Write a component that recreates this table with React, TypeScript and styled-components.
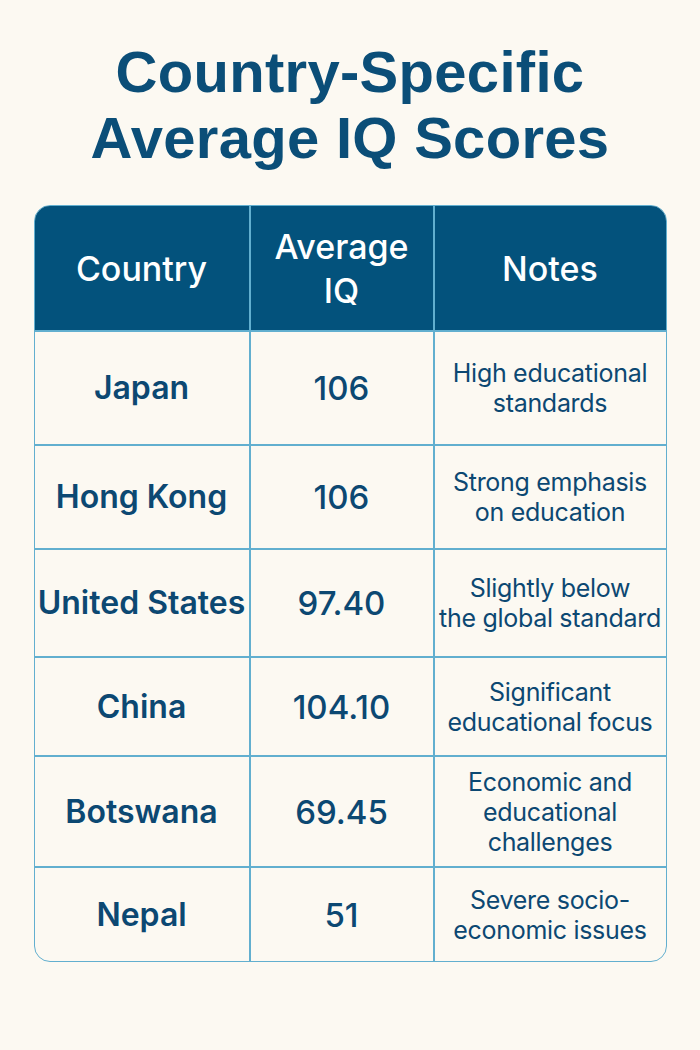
import React from "react";
import styled, { createGlobalStyle } from "styled-components";

const Global = createGlobalStyle`
  html, body { margin: 0; padding: 0; background: #fcf9f2; }
  body { font-family: Inter, "Noto Sans", sans-serif; }
`;

const Page = styled.div`
  width: 700px;
  height: 1050px;
  background: #fcf9f2;
  display: flex;
  flex-direction: column;
  align-items: center;
  box-sizing: border-box;
  padding-top: 39px;
`;

const Title = styled.h1`
  margin: 0;
  font-family: "Liberation Sans", Arial, sans-serif;
  font-weight: 700;
  font-size: 58px;
  line-height: 66px;
  color: #0b4e78;
  text-align: center;
  letter-spacing: 0.3px;
`;

const Table = styled.div`
  margin-top: 34px;
  width: 633px;
  display: grid;
  grid-template-columns: 216px 184px 1fr;
  border: 1.5px solid #62afcf;
  border-radius: 16px;
  overflow: hidden;
  box-sizing: border-box;
`;

const HeadCell = styled.div<{ $last?: boolean }>`
  height: 126px;
  background: #03527c;
  color: #ffffff;
  font-weight: 500;
  font-size: 34px;
  line-height: 44px;
  display: flex;
  align-items: center;
  justify-content: center;
  text-align: center;
  border-right: ${(p) => (p.$last ? "none" : "2px solid #62afcf")};
  border-bottom: 2px solid #62afcf;
  box-sizing: border-box;
  padding-top: 2px;
`;

const Cell = styled.div<{ $h: number; $last?: boolean; $bottom?: boolean; $kind: "name" | "num" | "note" }>`
  height: ${(p) => p.$h}px;
  display: flex;
  align-items: center;
  justify-content: center;
  text-align: center;
  color: #0c4872;
  font-weight: ${(p) => (p.$kind === "note" ? 400 : p.$kind === "num" ? 500 : 600)};
  font-size: ${(p) => (p.$kind === "note" ? "25px" : p.$kind === "num" ? "33px" : "32px")};
  letter-spacing: ${(p) => (p.$kind === "note" ? "-0.3px" : "0")};
  line-height: ${(p) => (p.$kind === "note" ? "30px" : "38px")};
  white-space: ${(p) => (p.$kind === "note" ? "normal" : "nowrap")};
  border-right: ${(p) => (p.$last ? "none" : "2px solid #62afcf")};
  border-bottom: ${(p) => (p.$bottom ? "none" : "2px solid #62afcf")};
  box-sizing: border-box;
  padding: 0;
`;

const rows = [
  { c: "Japan", v: "106", n: ["High educational", "standards"], h: 114 },
  { c: "Hong Kong", v: "106", n: ["Strong emphasis", "on education"], h: 104 },
  { c: "United States", v: "97.40", n: ["Slightly below", "the global standard"], h: 108 },
  { c: "China", v: "104.10", n: ["Significant", "educational focus"], h: 99 },
  { c: "Botswana", v: "69.45", n: ["Economic and", "educational", "challenges"], h: 111 },
  { c: "Nepal", v: "51", n: ["Severe socio-", "economic issues"], h: 93 },
];

export default function App() {
  return (
    <Page>
      <Global />
      <Title>
        Country-Specific
        <br />
        Average IQ Scores
      </Title>
      <Table>
        <HeadCell>Country</HeadCell>
        <HeadCell>
          Average
          <br />
          IQ
        </HeadCell>
        <HeadCell $last>Notes</HeadCell>
        {rows.map((r, i) => {
          const bottom = i === rows.length - 1;
          return (
            <React.Fragment key={r.c}>
              <Cell $h={r.h} $kind="name" $bottom={bottom}>{r.c}</Cell>
              <Cell $h={r.h} $kind="num" $bottom={bottom}>{r.v}</Cell>
              <Cell $h={r.h} $kind="note" $last $bottom={bottom}>
                <div>
                  {r.n.map((l, j) => (
                    <React.Fragment key={j}>
                      {l}
                      {j < r.n.length - 1 && <br />}
                    </React.Fragment>
                  ))}
                </div>
              </Cell>
            </React.Fragment>
          );
        })}
      </Table>
    </Page>
  );
}
